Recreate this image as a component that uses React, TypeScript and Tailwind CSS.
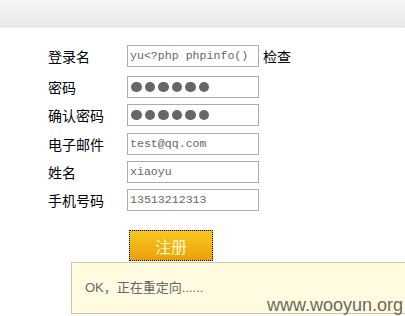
const CJK = { fontFamily: '"Noto Sans CJK SC", "Noto Sans", sans-serif' };
const MONO = { fontFamily: '"Liberation Mono", "DejaVu Sans Mono", monospace' };

const Dots = () => (
  <div className="flex items-center gap-[3px] pl-[3px]">
    {[0, 1, 2, 3, 4, 5].map((i) => (
      <span key={i} className="h-[10.5px] w-[10.5px] rounded-full bg-[#666]" />
    ))}
  </div>
);

const ROWS = [
  { label: "登录名", value: "yu<?php phpinfo()", extra: "检查", mb: "mb-[9px]" },
  { label: "密码", dots: true, mb: "mb-[6px]" },
  { label: "确认密码", dots: true, mb: "mb-[7px]" },
  { label: "电子邮件", value: "test@qq.com", mb: "mb-[6px]" },
  { label: "姓名", value: "xiaoyu", mb: "mb-[6px]" },
  { label: "手机号码", value: "13513212313", mb: "" },
];

export default function App() {
  return (
    <div className="relative h-[316px] w-[405px] overflow-hidden bg-white" style={CJK}>
      <div className="h-[27px] bg-gradient-to-b from-[#f7f7f7] to-[#e8e8e8]" />
      <div className="h-px bg-[#ececec]" />
      <div className="pl-[48px] pt-[17px]">
        {ROWS.map((r) => (
          <div key={r.label} className={`flex h-[22px] items-center ${r.mb}`}>
            <div className="w-[79px] text-[14px] leading-none text-black">{r.label}</div>
            <div className="flex h-[22px] w-[132px] items-center border border-[#a5acb2] bg-white">
              {r.dots ? (
                <Dots />
              ) : (
                <span className="pl-[2px] text-[11.6px] leading-none text-[#666]" style={MONO}>
                  {r.value}
                </span>
              )}
            </div>
            {r.extra && <span className="ml-[4px] text-[14px] leading-none text-black">{r.extra}</span>}
          </div>
        ))}
        <div className="mt-[19px] pl-[81px]">
          <button className="flex h-[31px] w-[84px] items-center justify-center border border-dotted border-black bg-gradient-to-b from-[#f6c81c] to-[#eba10a] text-[16px] leading-none text-[#fff6cc]">
            注册
          </button>
        </div>
      </div>

      <div className="absolute left-[71px] top-[262px] flex h-[52px] w-[350px] items-center border border-[#d6c39a] bg-[#fffbe1] pl-[13px] text-[13px] text-[#666]">
        <span style={{ fontFamily: '"Liberation Sans", "Noto Sans CJK SC", sans-serif' }}>OK，正在重定向......</span>
      </div>
      <div
        className="absolute left-[267px] top-[296px] text-[18px] leading-none text-[#6b6a5c]"
        style={{ fontFamily: '"Liberation Sans", Arial, sans-serif' }}
      >
        www.wooyun.org
      </div>
    </div>
  );
}
